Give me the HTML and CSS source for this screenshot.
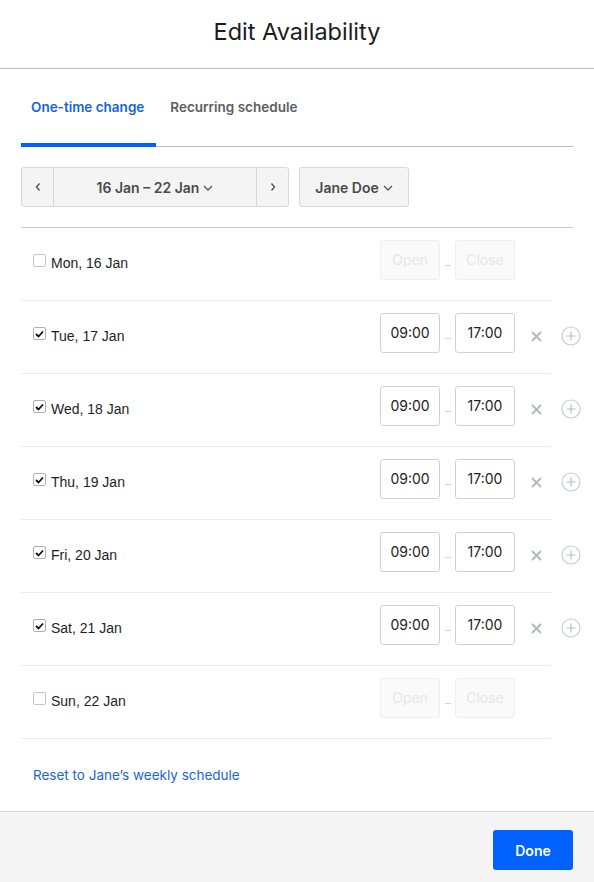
FILE: index.html
```html
<!DOCTYPE html>
<html>
<head>
	<title>Edit Availability</title>
	<link rel="stylesheet" href="styles.css">
</head>
<body>
	<div class="header">
		<h1>Edit Availability</h1>
	</div>
	<div class="content">
		<div class="tabs">
			<div class="tab active">One-time change</div>
			<div class="tab">Recurring schedule</div>
		</div>
		<div class="toolbar">
			<div class="week-picker">
				<div class="arrow">
					<svg width="8" height="10" viewBox="0 0 8 10"><path d="M5.5 1.5 L2.5 5 L5.5 8.5" fill="none" stroke="#555" stroke-width="1.4"/></svg>
				</div>
				<div class="week">16 Jan &ndash; 22 Jan
					<svg class="chev" width="10" height="6" viewBox="0 0 10 6"><path d="M1 1 L5 5 L9 1" fill="none" stroke="#555" stroke-width="1.3"/></svg>
				</div>
				<div class="arrow">
					<svg width="8" height="10" viewBox="0 0 8 10"><path d="M2.5 1.5 L5.5 5 L2.5 8.5" fill="none" stroke="#555" stroke-width="1.4"/></svg>
				</div>
			</div>
			<div class="person">Jane Doe
				<svg class="chev" width="10" height="6" viewBox="0 0 10 6"><path d="M1 1 L5 5 L9 1" fill="none" stroke="#555" stroke-width="1.3"/></svg>
			</div>
		</div>

		<div class="days">
			<div class="day">
				<div class="day-label"><span class="check"></span>Mon, 16 Jan</div>
				<div class="times">
					<div class="time off">Open</div><span class="dash"></span><div class="time off">Close</div>
				</div>
				<div class="actions"></div>
			</div>
			<div class="day">
				<div class="day-label"><span class="check on"><svg width="9" height="8" viewBox="0 0 9 8"><path d="M1 4 L3.5 6.5 L8 1.5" fill="none" stroke="#111" stroke-width="1.8"/></svg></span>Tue, 17 Jan</div>
				<div class="times">
					<div class="time">09:00</div><span class="dash"></span><div class="time">17:00</div>
				</div>
				<div class="actions">
					<svg class="remove" width="11" height="11" viewBox="0 0 11 11"><path d="M1 1 L10 10 M10 1 L1 10" stroke="#b3b6ba" stroke-width="1.8"/></svg>
					<svg class="add" width="20" height="20" viewBox="0 0 20 20"><circle cx="10" cy="10" r="9" fill="none" stroke="#c9ccd0" stroke-width="1.2"/><path d="M10 5.5 V14.5 M5.5 10 H14.5" stroke="#b8bcc1" stroke-width="1.2"/></svg>
				</div>
			</div>
			<div class="day">
				<div class="day-label"><span class="check on"><svg width="9" height="8" viewBox="0 0 9 8"><path d="M1 4 L3.5 6.5 L8 1.5" fill="none" stroke="#111" stroke-width="1.8"/></svg></span>Wed, 18 Jan</div>
				<div class="times">
					<div class="time">09:00</div><span class="dash"></span><div class="time">17:00</div>
				</div>
				<div class="actions">
					<svg class="remove" width="11" height="11" viewBox="0 0 11 11"><path d="M1 1 L10 10 M10 1 L1 10" stroke="#b3b6ba" stroke-width="1.8"/></svg>
					<svg class="add" width="20" height="20" viewBox="0 0 20 20"><circle cx="10" cy="10" r="9" fill="none" stroke="#c9ccd0" stroke-width="1.2"/><path d="M10 5.5 V14.5 M5.5 10 H14.5" stroke="#b8bcc1" stroke-width="1.2"/></svg>
				</div>
			</div>
			<div class="day">
				<div class="day-label"><span class="check on"><svg width="9" height="8" viewBox="0 0 9 8"><path d="M1 4 L3.5 6.5 L8 1.5" fill="none" stroke="#111" stroke-width="1.8"/></svg></span>Thu, 19 Jan</div>
				<div class="times">
					<div class="time">09:00</div><span class="dash"></span><div class="time">17:00</div>
				</div>
				<div class="actions">
					<svg class="remove" width="11" height="11" viewBox="0 0 11 11"><path d="M1 1 L10 10 M10 1 L1 10" stroke="#b3b6ba" stroke-width="1.8"/></svg>
					<svg class="add" width="20" height="20" viewBox="0 0 20 20"><circle cx="10" cy="10" r="9" fill="none" stroke="#c9ccd0" stroke-width="1.2"/><path d="M10 5.5 V14.5 M5.5 10 H14.5" stroke="#b8bcc1" stroke-width="1.2"/></svg>
				</div>
			</div>
			<div class="day">
				<div class="day-label"><span class="check on"><svg width="9" height="8" viewBox="0 0 9 8"><path d="M1 4 L3.5 6.5 L8 1.5" fill="none" stroke="#111" stroke-width="1.8"/></svg></span>Fri, 20 Jan</div>
				<div class="times">
					<div class="time">09:00</div><span class="dash"></span><div class="time">17:00</div>
				</div>
				<div class="actions">
					<svg class="remove" width="11" height="11" viewBox="0 0 11 11"><path d="M1 1 L10 10 M10 1 L1 10" stroke="#b3b6ba" stroke-width="1.8"/></svg>
					<svg class="add" width="20" height="20" viewBox="0 0 20 20"><circle cx="10" cy="10" r="9" fill="none" stroke="#c9ccd0" stroke-width="1.2"/><path d="M10 5.5 V14.5 M5.5 10 H14.5" stroke="#b8bcc1" stroke-width="1.2"/></svg>
				</div>
			</div>
			<div class="day">
				<div class="day-label"><span class="check on"><svg width="9" height="8" viewBox="0 0 9 8"><path d="M1 4 L3.5 6.5 L8 1.5" fill="none" stroke="#111" stroke-width="1.8"/></svg></span>Sat, 21 Jan</div>
				<div class="times">
					<div class="time">09:00</div><span class="dash"></span><div class="time">17:00</div>
				</div>
				<div class="actions">
					<svg class="remove" width="11" height="11" viewBox="0 0 11 11"><path d="M1 1 L10 10 M10 1 L1 10" stroke="#b3b6ba" stroke-width="1.8"/></svg>
					<svg class="add" width="20" height="20" viewBox="0 0 20 20"><circle cx="10" cy="10" r="9" fill="none" stroke="#c9ccd0" stroke-width="1.2"/><path d="M10 5.5 V14.5 M5.5 10 H14.5" stroke="#b8bcc1" stroke-width="1.2"/></svg>
				</div>
			</div>
			<div class="day">
				<div class="day-label"><span class="check"></span>Sun, 22 Jan</div>
				<div class="times">
					<div class="time off">Open</div><span class="dash"></span><div class="time off">Close</div>
				</div>
				<div class="actions"></div>
			</div>
		</div>

		<div class="reset"><a href="#">Reset to Jane’s weekly schedule</a></div>
	</div>
	<div class="footer">
		<button class="done">Done</button>
	</div>
</body>
</html>
```

FILE: styles.css
```css
* {
	box-sizing: border-box;
}
body {
	margin: 0;
	font-family: Inter, "Liberation Sans", sans-serif;
	color: #222;
	background: #fff;
}
.header {
	height: 69px;
	border-bottom: 1px solid #b9bfc7;
	text-align: center;
}
.header h1 {
	margin: 0;
	padding-top: 18px;
	font-size: 23.5px;
	line-height: 28px;
	font-weight: 400;
	color: #1c1c1c;
}
.content {
	padding: 0 21px;
}
.tabs {
	display: flex;
	border-bottom: 1px solid #b9c0c8;
}
.tab {
	padding: 30px 12px 28px 10px;
	font-size: 13.5px;
	line-height: 16px;
	font-weight: 600;
	color: #5a5d61;
	border-bottom: 4px solid transparent;
	margin-bottom: -1px;
}
.tab + .tab {
	padding-left: 14px;
}
.tab.active {
	color: #1463e0;
	border-bottom-color: #0061ff;
}
.toolbar {
	display: flex;
	gap: 10px;
	margin-top: 20px;
	margin-bottom: 20px;
}
.week-picker, .person {
	display: flex;
	height: 40px;
	background: #f4f4f4;
	border: 1px solid #d8d8d8;
	border-radius: 3px;
	font-size: 14px;
	font-weight: 600;
	color: #4a4a4a;
}
.week-picker {
	width: 268px;
}
.arrow {
	width: 31px;
	display: flex;
	align-items: center;
	justify-content: center;
}
.arrow + .week {
	border-left: 1px solid #d8d8d8;
}
.week {
	flex: 1;
	border-right: 1px solid #d8d8d8;
	display: flex;
	align-items: center;
	justify-content: center;
}
.person {
	width: 110px;
	align-items: center;
	justify-content: center;
}
.chev {
	margin-left: 4px;
	margin-top: 2px;
}
.days {
	border-top: 1px solid #c9c9c9;
}
.day {
	display: flex;
	align-items: flex-start;
	width: 530px;
	height: 73px;
	padding: 12px 0 20px 12px;
	border-bottom: 1px solid #ececec;
}
.day-label {
	flex: 1;
	display: flex;
	align-items: flex-end;
	margin-top: 14px;
	font-family: "Liberation Sans", Arial, sans-serif;
	font-size: 14px;
	line-height: 16px;
	color: #1e1e1e;
}
.check {
	width: 13px;
	height: 13px;
	margin-right: 5px;
	margin-bottom: 4px;
	border: 1px solid #c4c4c4;
	border-radius: 2px;
	background: #fff;
	display: flex;
	align-items: center;
	justify-content: center;
}
.check.on {
	border-color: #b0b0b0;
}
.times {
	display: flex;
}
.time {
	width: 60px;
	height: 40px;
	border: 1px solid #d2d2d2;
	border-radius: 3px;
	font-size: 14px;
	line-height: 38px;
	text-align: center;
	color: #222;
}
.time.off {
	background: #fafafa;
	border-color: #efefef;
	color: #e6e6e6;
}
.dash {
	width: 15px;
	display: flex;
	justify-content: center;
}
.dash::after {
	content: "";
	width: 6px;
	height: 1px;
	margin-top: 25px;
	background: #d4d4d4;
}
.actions {
	width: 36px;
	flex-shrink: 0;
	display: flex;
	align-items: center;
	height: 40px;
	padding-top: 6px;
}
.actions svg {
	flex-shrink: 0;
}
.remove {
	margin-left: 16px;
}
.add {
	margin-left: 19px;
}
.reset {
	padding: 28px 12px;
	font-size: 13.5px;
	line-height: 16px;
}
.reset a {
	color: #1a64da;
	text-decoration: none;
}
.footer {
	border-top: 1px solid #d6d6d6;
	background: #f4f4f4;
	height: 71px;
	padding: 18px 21px 0;
	display: flex;
	justify-content: flex-end;
	align-items: flex-start;
}
.done {
	width: 80px;
	height: 40px;
	border: none;
	border-radius: 3px;
	background: #0061fe;
	color: #fff;
	font-family: Inter, sans-serif;
	font-size: 14px;
	font-weight: 600;
}
```
